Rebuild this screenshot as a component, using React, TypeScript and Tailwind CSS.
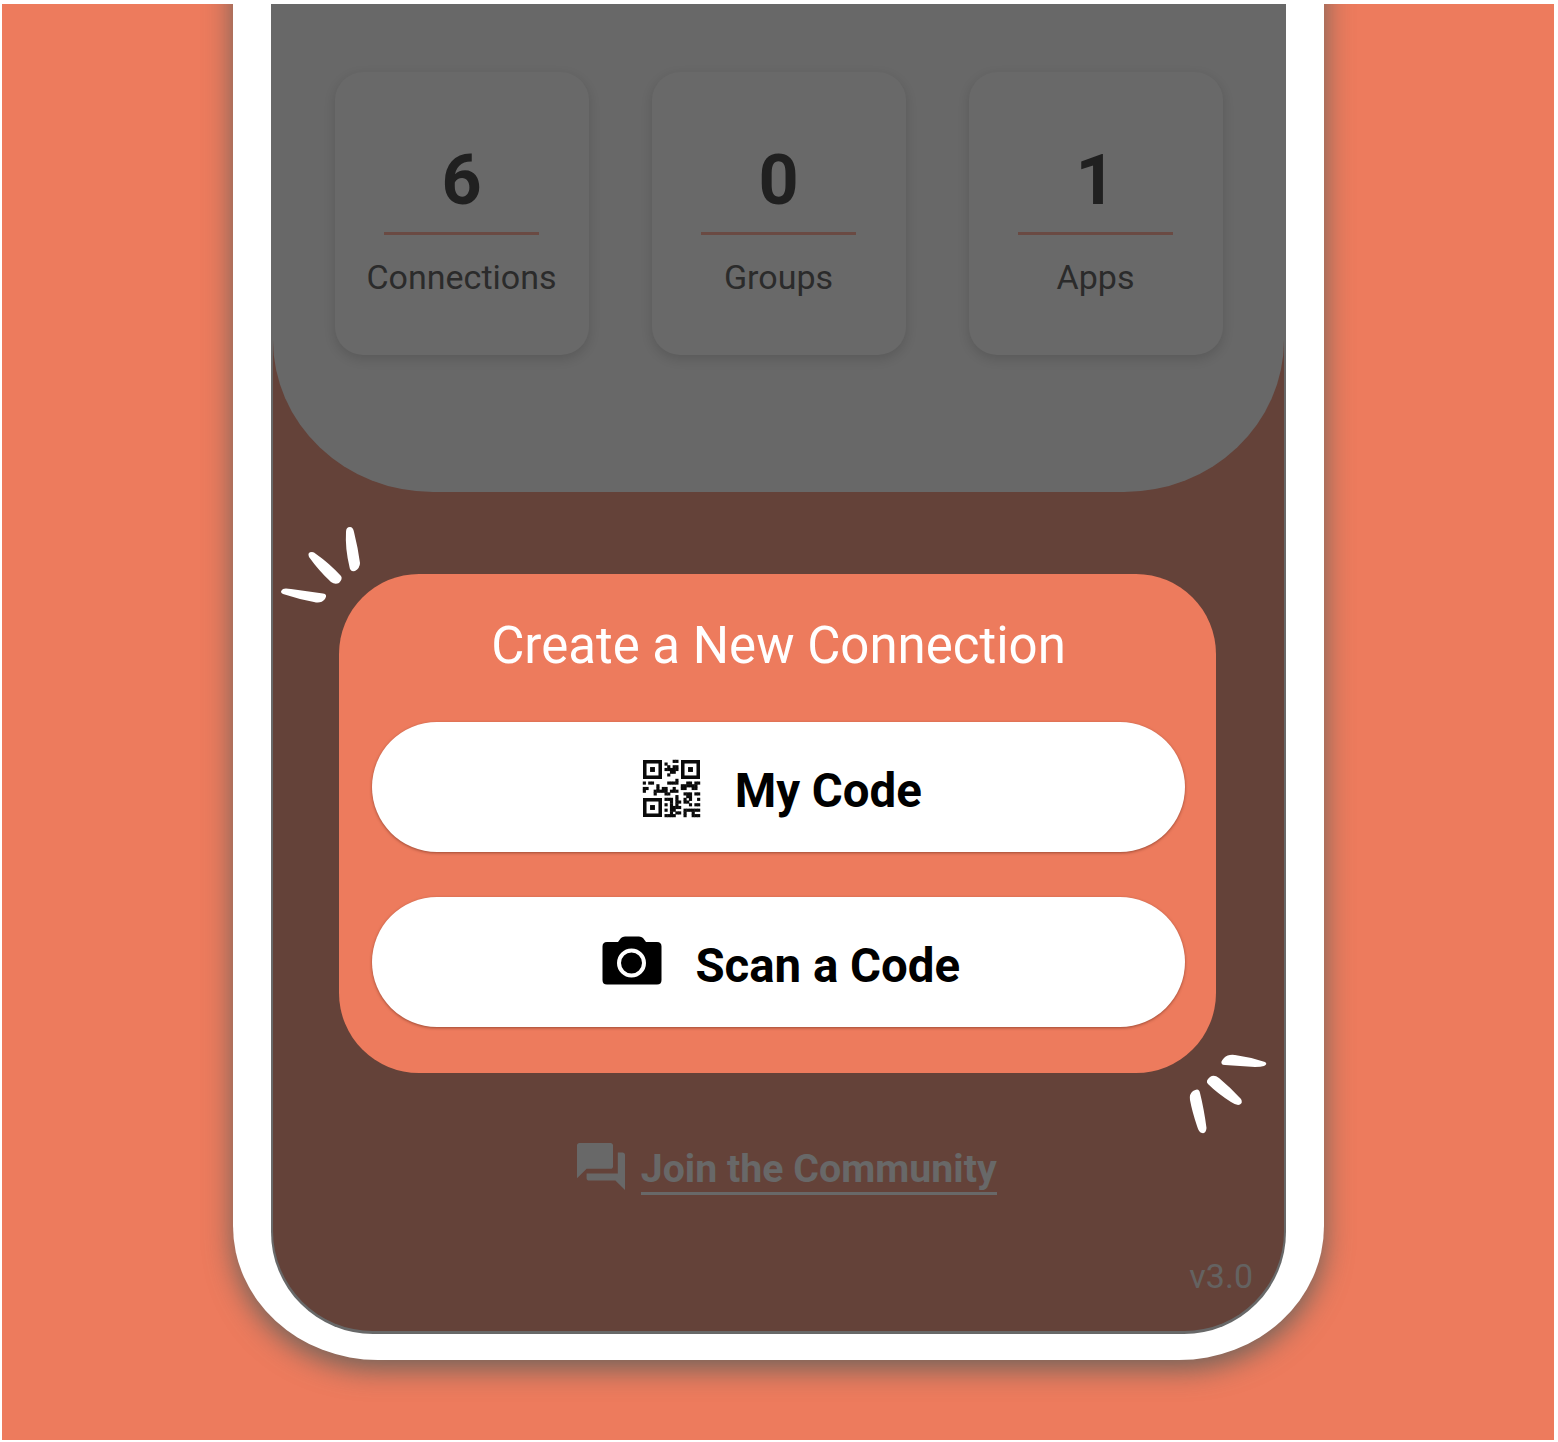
import React from "react";

const QR_ROWS = [
  "...........11........",
  "........1............",
  ".........1.11........",
  "........11111........",
  "..........11.........",
  ".........1...........",
  ".....................",
  "............1........",
  "1.11.....1111...11.11",
  ".....1........111111.",
  "11...1.11..1..11..11.",
  "1...11111.111........",
  "....1...11.....111.11",
  "............1...11...",
  "........111.1..1.1..1",
  "..........1.11.11....",
  "........1.1.1....1.11",
  "..........1111.......",
  "........1.11...111111",
  "..........1.11.1..1..",
  "........1111...1..111",
];

function QrFinder({ x, y }: { x: number; y: number }) {
  return (
    <>
      <rect x={x + 0.65} y={y + 0.65} width="5.7" height="5.7" fill="none" stroke="#0a0a0a" strokeWidth="1.3" />
      <rect x={x + 2.6} y={y + 2.6} width="1.8" height="1.8" />
    </>
  );
}

function QrIcon() {
  return (
    <svg className="relative top-[1px] h-[57px] w-[57px] overflow-visible" viewBox="0 0 21 21" fill="#0a0a0a">
      <QrFinder x={0} y={0} />
      <QrFinder x={14} y={0} />
      <QrFinder x={0} y={14} />
      {QR_ROWS.flatMap((row, y) =>
        [...row].map((c, x) =>
          c === "1" ? <rect key={`${x}-${y}`} x={x - 0.08} y={y - 0.08} width="1.16" height="1.16" /> : null,
        ),
      )}
    </svg>
  );
}

function CameraIcon() {
  return (
    <svg className="relative -top-[1px] h-[50px] w-[60px]" viewBox="0 0 60 50">
      <path
        d="M5 6H16L19 2Q20.500 0.500 23 0.500H37Q39.500 0.500 41 2L44 6H55Q59.500 6 59.500 10.500V44Q59.500 48.500 55 48.500H5Q0.500 48.500 0.500 44V10.500Q0.500 6 5 6Z"
        fill="#000"
      />
      <circle cx="29.500" cy="27" r="12.500" fill="none" stroke="#fff" strokeWidth="4" />
    </svg>
  );
}

function ChatIcon() {
  return (
    <svg className="mt-[1px] h-[47px] w-[48px]" viewBox="2 2 20 20" preserveAspectRatio="none" fill="#686868">
      <path d="M21 6h-2v9H6v2c0 .55.45 1 1 1h11l4 4V7c0-.55-.45-1-1-1zm-4 6V3c0-.55-.45-1-1-1H3c-.55 0-1 .45-1 1v14l4-4h10c.55 0 1-.45 1-1z" />
    </svg>
  );
}

function StatCard({ value, label }: { value: string; label: string }) {
  return (
    <div className="flex h-[283px] w-[254px] flex-col items-center rounded-[28px] bg-[#696969] pt-[67px] shadow-[0_4px_12px_rgba(0,0,0,0.14)]">
      <div className="h-[82px] text-[70px] leading-[82px] font-bold text-[#202020]">{value}</div>
      <div className="mt-[11px] h-[3px] w-[155px] bg-[#6a4a43]" />
      <div className="mt-[20px] text-[34px] leading-[44px] text-[#2b2b2b]">{label}</div>
    </div>
  );
}

function ActionButton({ icon, label, spacing }: { icon: React.ReactNode; label: string; spacing: string }) {
  return (
    <button
      className={`flex h-[130px] w-[813px] items-center justify-center rounded-full bg-white text-[47.400px] leading-[56px] font-bold text-black shadow-[0_1px_3px_rgba(80,30,15,0.5)] ${spacing}`}
    >
      {icon}
      <span className="relative top-[3.500px]">{label}</span>
    </button>
  );
}

export default function App() {
  return (
    <div className="h-[1442px] w-[1558px] overflow-hidden bg-white pt-[4px] pl-[2px] font-[Roboto,sans-serif]">
      <div className="h-[1436px] w-[1552px] overflow-hidden bg-[#ed7b5d]">
        <div className="-mt-[60px] ml-[231px] h-[1416px] w-[1091px] rounded-b-[145px_134px] bg-white pt-[60px] pl-[38px] shadow-[0_9px_28px_rgba(60,90,90,0.72)]">
          <div className="relative h-[1330px] w-[1015px] rounded-b-[102px] bg-[#686868] px-[2px] pb-[3px]">
            <div className="flex h-full flex-col items-center overflow-hidden rounded-b-[100px] bg-[#644239]">
              <div className="flex h-[488px] w-full shrink-0 justify-center gap-[63px] rounded-b-[160px_152px] bg-[#686868] pt-[68px]">
                <StatCard value="6" label="Connections" />
                <StatCard value="0" label="Groups" />
                <StatCard value="1" label="Apps" />
              </div>
              <div className="mt-[82px] mr-[2px] flex h-[499px] w-[877px] shrink-0 flex-col items-center rounded-[80px] bg-[#ed7b5d] pt-[40px] pl-[2px]">
                <h1 className="h-[64px] text-[51px] leading-[64px] text-white">Create a New Connection</h1>
                <div className="mt-[44px] flex flex-col gap-[45px]">
                  <ActionButton icon={<QrIcon />} label="My Code" spacing="gap-[34.500px] pl-[8px]" />
                  <ActionButton icon={<CameraIcon />} label="Scan a Code" spacing="gap-[33.500px] pl-[5px]" />
                </div>
              </div>
              <div className="mt-[69px] ml-[17px] flex items-start gap-[15.500px]">
                <ChatIcon />
                <a className="mt-[4px] h-[49px] border-b-[3px] border-[#686868] text-[39.300px] leading-[46px] font-bold text-[#686868]">
                  Join the Community
                </a>
              </div>
              <div className="mt-[59px] mr-[31px] self-end text-[34px] leading-[44px] text-[#646261]">v3.0</div>
            </div>
            <svg className="absolute top-[516px] left-[5px] h-[90px] w-[90px]" viewBox="276 520 90 90" fill="#fff">
              <path d="M346 532Q346 527 350 527Q353 527 354 532Q358 548 360 563Q360 568 355 571Q350 572 349.500 567Q345 548 346 532Z" />
              <path d="M309 557Q307 552 312 552Q314 552 316 554Q329 563 341 576Q343 579 339 583Q335 585 331 582Q319 571 309 557Z" />
              <path d="M283 594Q279 592 283 589Q285 588 291 589L323 593.500Q328 594 325 599Q321 604 314 602Q298 599 283 594Z" />
            </svg>
            <svg className="absolute top-[1046px] left-[914px] h-[90px] w-[86px]" viewBox="1185 1050 86 90" fill="#fff">
              <path d="M1222 1064Q1220 1062 1224 1058Q1228 1054 1235 1055Q1250 1057 1265 1062Q1268 1064 1264 1066Q1261 1067 1255 1067L1225 1065Q1222 1065 1222 1064Z" />
              <path d="M1208 1084Q1205 1081 1210 1077Q1214 1074 1219 1078Q1231 1088 1241 1099Q1243 1103 1240 1104.500Q1237 1106 1231 1102Q1217 1093 1208 1084Z" />
              <path d="M1190 1100Q1189 1094 1193 1091Q1199 1087 1200 1093Q1204 1109 1206.500 1128Q1206 1134 1202 1133Q1199 1133 1197 1126Q1192 1111 1190 1100Z" />
            </svg>
          </div>
        </div>
      </div>
    </div>
  );
}
